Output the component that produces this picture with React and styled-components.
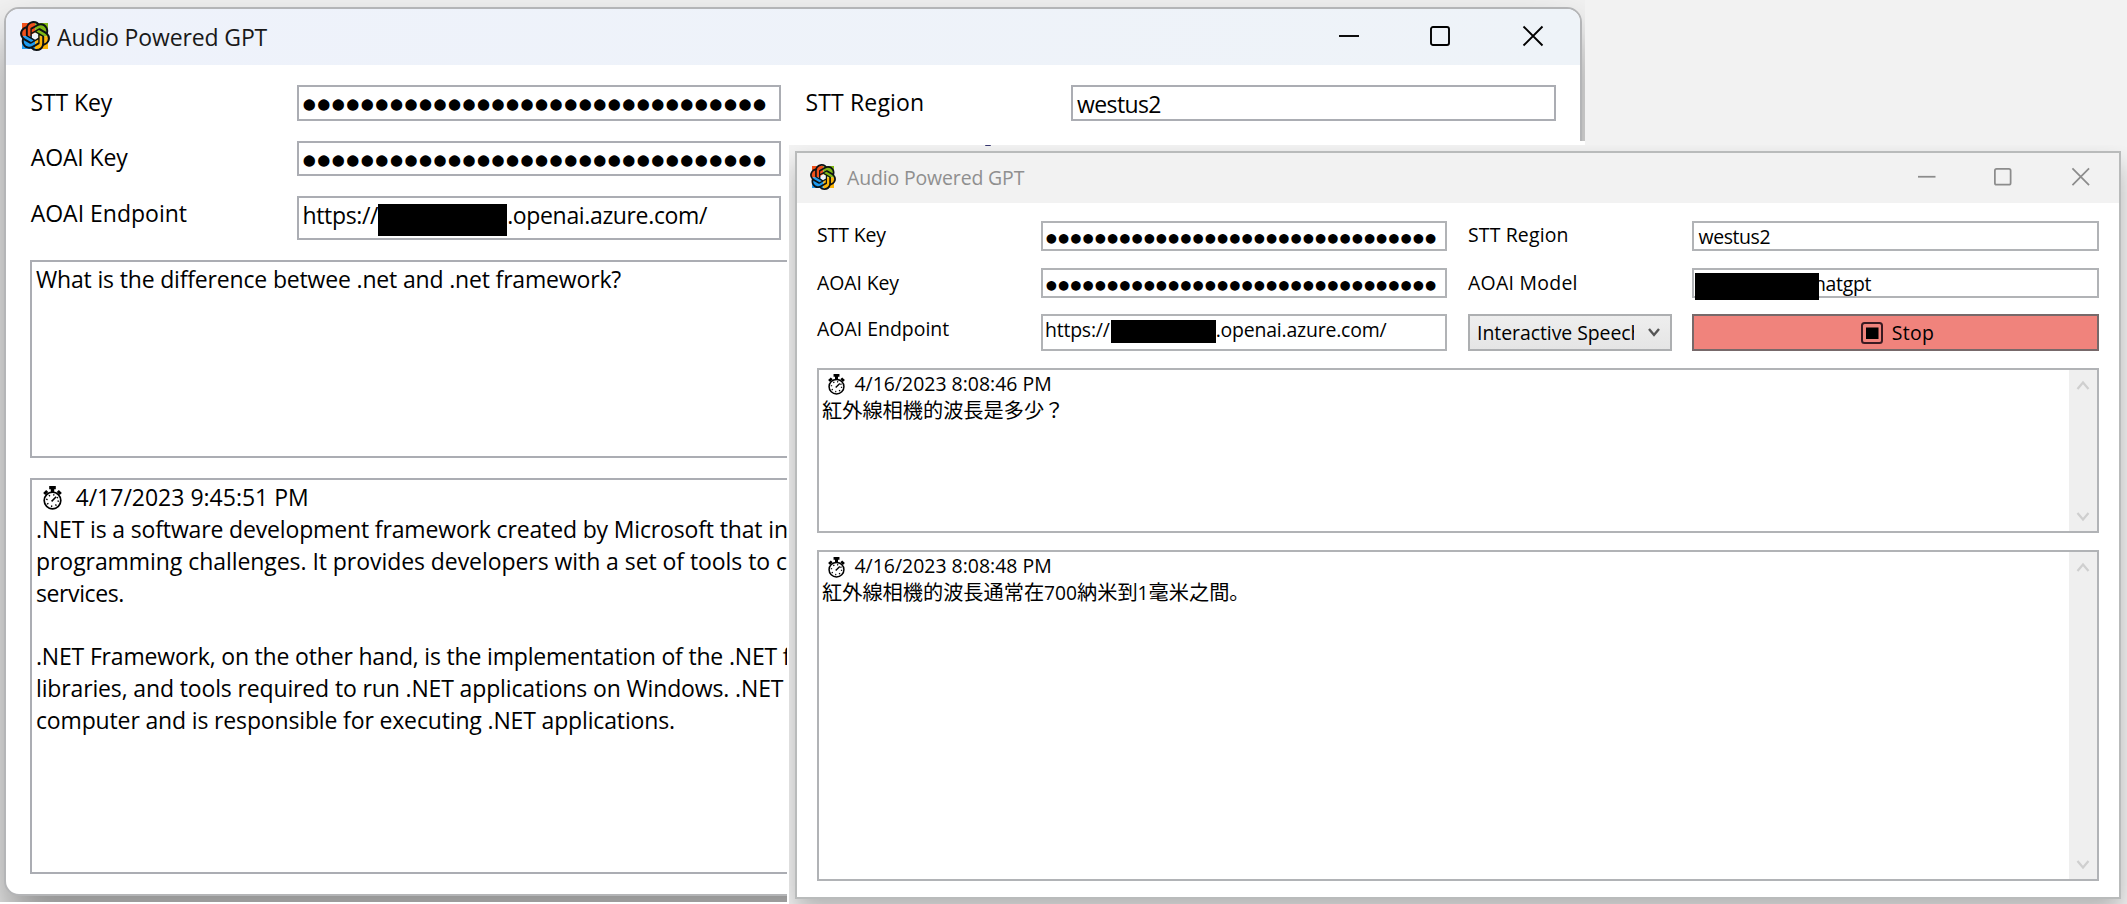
import React from "react";
import styled, { createGlobalStyle, ThemeProvider } from "styled-components";
import { SiOpenai } from "react-icons/si";

const GlobalStyle = createGlobalStyle`
  html, body { margin: 0; background: #f2f2f2; overflow: hidden; }
  *, *::before, *::after { box-sizing: border-box; }
`;

const large = {
  font: 23, line: 32, bullet: 19.2, bulletTrack: 2.97, edge: "#b4b5b7", field: "#abadb3",
  bar: "linear-gradient(90deg, #eef2fb, #eef3f8)", barHeight: 56, title: "#191919", radius: 15,
  logo: 30, glyph: "#000", glyphSize: 20, pad: "20px 24px 20px 24px",
  columns: "267px 484px 290px 485px", rows: "36px 35px 44px", gap: 20,
  shadow: "0 30px 50px rgba(0,0,0,.42)",
};

const small = {
  font: 19.45, line: 27, bullet: 16.2, bulletTrack: 2.49, edge: "#b9bbbb", field: "#b1b3b6",
  bar: "#f2f2f2", barHeight: 50, title: "#8f8f8f", radius: 0,
  logo: 26, glyph: "#8c8c8c", glyphSize: 17.5, pad: "18px 20px 16px 20px",
  columns: "224px 406px 245px 407px", rows: "30px 30px 37px", gap: 16.6,
  shadow: "0 14px 24px rgba(0,0,0,.26)",
};

const Desktop = styled.main`
  position: relative;
  width: 2127px;
  height: 904px;
  overflow: hidden;
  font-family: "Open Sans", "Noto Sans CJK JP", sans-serif;
  color: #000;
`;

const BackCapture = styled.section`
  position: absolute;
  left: 0;
  top: 0;
  width: 1585px;
  height: 904px;
  padding: 7px 3px 8px 4px;
  overflow: hidden;
  border-bottom: 2px solid #fff;
`;

const Backing = styled.div`
  position: absolute;
  left: 787px;
  top: 141px;
  width: 798px;
  height: 763px;
  background: #fff;
`;

const FrontCapture = styled.section`
  position: absolute;
  left: 789px;
  top: 145px;
  width: 1338px;
  height: 759px;
  padding: 6px 6px 5px;
  overflow: hidden;
  background: #f3f3f3;
`;

const Speck = styled.span`
  position: absolute;
  left: 196px;
  top: 0;
  width: 6px;
  height: 1px;
  border-radius: 0 0 3px 3px;
  background: #35356e;
`;

const Window = styled.article`
  display: flex;
  flex-direction: column;
  width: ${(p) => p.$width}px;
  height: ${(p) => p.$height}px;
  border: 2px solid ${(p) => p.theme.edge};
  border-radius: ${(p) => p.theme.radius}px;
  background: #fff;
  box-shadow: ${(p) => p.theme.shadow};
  font-size: ${(p) => p.theme.font}px;
  line-height: ${(p) => p.theme.line}px;
  white-space: pre;
`;

const TitleBar = styled.header`
  display: flex;
  flex: none;
  align-items: flex-start;
  height: ${(p) => p.theme.barHeight}px;
  padding-left: ${(p) => p.$left}px;
  padding-right: ${(p) => p.$right}px;
  border-radius: ${(p) => Math.max(0, p.theme.radius - 2)}px ${(p) => Math.max(0, p.theme.radius - 2)}px 0 0;
  background: ${(p) => p.theme.bar};
  color: ${(p) => p.theme.title};
`;

const TitleText = styled.h1`
  flex: 1;
  margin: ${(p) => p.$top}px 0 0 ${(p) => p.$gap}px;
  font: inherit;
  letter-spacing: -0.13px;
`;

const LogoTile = styled.span`
  position: relative;
  display: flex;
  width: ${(p) => p.theme.logo}px;
  height: ${(p) => p.theme.logo}px;
  margin-top: ${(p) => p.$top}px;
  align-items: center;
  justify-content: center;
  color: #0d1216;
  svg.knot { position: absolute; inset: 0; width: 100%; height: 100%; }
  svg.tiles { width: 88%; height: 88%; }
`;

const WindowButtons = styled.div`
  display: flex;
  gap: ${(p) => p.$gap}px;
  margin-top: ${(p) => p.$top}px;
  svg { display: block; width: ${(p) => p.theme.glyphSize}px; height: ${(p) => p.theme.glyphSize}px; overflow: visible; }
  svg:nth-child(2) { margin: 0 1px 0 -1px; }
`;

const Body = styled.div`
  display: flex;
  flex: 1;
  flex-direction: column;
  gap: ${(p) => p.theme.gap}px;
  padding: ${(p) => p.theme.pad};
`;

const Form = styled.div`
  display: grid;
  grid-template-columns: ${(p) => p.theme.columns};
  grid-template-rows: ${(p) => p.theme.rows};
  row-gap: ${(p) => p.theme.gap}px;
`;

const Label = styled.label`
  padding-left: ${(p) => p.$indent || 0}px;
  padding-top: ${(p) => p.$top || 0}px;
`;

const Text = styled.span`
  letter-spacing: ${(p) => p.$track || 0}px;
  margin-left: ${(p) => p.$shift || 0}px;
`;

const Field = styled.div`
  display: flex;
  align-items: flex-start;
  padding: ${(p) => p.$top || 0}px 0 0 ${(p) => p.$left || 3}px;
  border: 2px solid ${(p) => p.theme.field};
  background: #fff;
`;

const Bullets = styled.span`
  margin-top: ${(p) => p.$top}px;
  padding-left: 1.5px;
  font-family: "DejaVu Sans Mono", monospace;
  font-size: ${(p) => p.theme.bullet}px;
  letter-spacing: ${(p) => p.theme.bulletTrack}px;
`;

const Redaction = styled.span`
  position: relative;
  flex: none;
  width: ${(p) => p.$width}px;
  height: ${(p) => p.$height}px;
  margin-top: ${(p) => p.$top}px;
  margin-left: ${(p) => p.$left || 0}px;
  background: #000;
`;

const Combo = styled.div`
  display: flex;
  align-items: center;
  width: 204px;
  margin-left: 21px;
  padding: 0 9px 0 7px;
  border: 2px solid #adafb1;
  background: linear-gradient(#eeeeee, #e5e5e5);
`;

const ComboText = styled.span`
  width: 157px;
  overflow: hidden;
  margin-right: 14px;
  letter-spacing: -0.05px;
`;

const StopButton = styled.button`
  display: flex;
  align-items: center;
  justify-content: center;
  gap: 9px;
  padding: 0 0 0 4px;
  border: 2px solid #77696a;
  background: #f0837c;
  color: #000;
  font: inherit;
  letter-spacing: 0.3px;
`;

const TextArea = styled.div`
  display: flex;
  flex: none;
  height: ${(p) => p.$height}px;
  width: ${(p) => p.$width}px;
  margin-top: ${(p) => p.$top || 0}px;
  border: 2px solid ${(p) => p.theme.field};
  background: #fff;
`;

const TextContent = styled.div`
  flex: 1;
  padding: ${(p) => p.$pad};
`;

const Line = styled.div`
  height: ${(p) => p.$height || 31.9}px;
  letter-spacing: ${(p) => p.$track || 0}px;
  font-size: ${(p) => (p.$size ? p.$size + "px" : "inherit")};
`;

const StampLine = styled(Line)`
  display: flex;
  padding-left: ${(p) => p.$indent}px;
  svg { flex: none; margin-top: ${(p) => p.$top}px; margin-right: ${(p) => p.$gap}px; }
`;

const Digits = styled.span`
  font-size: 19.2px;
`;

const ScrollBar = styled.div`
  display: flex;
  flex-direction: column;
  align-items: center;
  justify-content: space-between;
  width: 28px;
  padding: 10px 0 9px;
  background: #efefef;
`;

const Logo = ({ top }) => (
  <LogoTile $top={top}>
    <svg className="tiles" viewBox="0 0 26 26">
      <path fill="#f1511b" d="M0 0h13v13H0z" />
      <path fill="#80b815" d="M13 0h13v13H13z" />
      <path fill="#1e9cf0" d="M0 13h13v13H0z" />
      <path fill="#fbb408" d="M13 13h13v13H13z" />
      <path fill="#eef3fa" d="M13 9.400l3.200 1.800v3.700L13 16.700l-3.200-1.800v-3.700z" />
    </svg>
    <SiOpenai className="knot" />
  </LogoTile>
);

const Controls = ({ gap, top, stroke, color }) => (
  <WindowButtons $gap={gap} $top={top}>
    <svg viewBox="0 0 20 20" fill="none" stroke={color} strokeWidth={stroke}><path d="M0 10h20" /></svg>
    <svg viewBox="0 0 20 20" fill="none" stroke={color} strokeWidth={stroke}><rect x="1" y="1" width="18" height="18" rx="2" /></svg>
    <svg viewBox="0 0 20 20" fill="none" stroke={color} strokeWidth={stroke}><path d="M.5.5l19 19M19.500.5l-19 19" /></svg>
  </WindowButtons>
);

const Stopwatch = ({ width, height }) => (
  <svg width={width} height={height} viewBox="0 0 19 24" preserveAspectRatio="none">
    <path d="M6.200 0h6.600v3.200h-1.600v2.800H7.800V3.200H6.200z" fill="#000" />
    <path d="M1.200 8l3-3M17.800 8l-3-3" stroke="#000" strokeWidth="3" />
    <circle cx="9.500" cy="14.500" r="8.300" fill="#fff" stroke="#000" strokeWidth="1.700" />
    <circle cx="9.500" cy="14.500" r="5.700" fill="none" stroke="#000" strokeWidth="1.500" strokeDasharray="1.300 3.177" />
    <path d="M8.600 15.400l4.600-4.600" stroke="#000" strokeWidth="1.500" />
  </svg>
);

const Chevron = ({ up }) => (
  <svg width="14" height="10" viewBox="0 0 14 10" fill="none" stroke="#cfcfcf" strokeWidth="2.200">
    <path d={up ? "M1.500 9L7 2.500 12.500 9" : "M1.500 1L7 7.500 12.500 1"} />
  </svg>
);

const Scroller = () => (
  <ScrollBar><Chevron up /><Chevron /></ScrollBar>
);

const dots = "●".repeat(32);

const BackWindow = () => (
  <ThemeProvider theme={large}>
    <Window $width={1578} $height={889}>
      <TitleBar $left={14} $right={37}>
        <Logo top={12} />
        <TitleText $top={12} $gap={7}>Audio Powered GPT</TitleText>
        <Controls gap={72} top={17} stroke={1.9} color={large.glyph} />
      </TitleBar>
      <Body>
        <Form>
          <Label $top={1} $indent={0.5}><Text $track={-0.1}>STT Key</Text></Label>
          <Field><Bullets $top={1}>{dots}</Bullets></Field>
          <Label $top={1} $indent={24.5}><Text $track={0.15}>STT Region</Text></Label>
          <Field $left={4} $top={0.5}><Text $track={-0.6}>westus2</Text></Field>
          <Label $indent={0.7}><Text $track={-0.1}>AOAI Key</Text></Label>
          <Field><Bullets $top={1}>{dots}</Bullets></Field>
          <span />
          <span />
          <Label $top={0.5} $indent={0.7}>AOAI Endpoint</Label>
          <Field $top={1} $left={3.5}>
            <Text $track={-0.35}>https://</Text>
            <Redaction $width={129} $height={32} $top={5} />
            <Text $track={-0.35}>.openai.azure.com/</Text>
          </Field>
        </Form>
        <TextArea $width={1526} $height={198}>
          <TextContent $pad="1px 4px">
            <Line $track={-0.17}>What is the difference betwee .net and .net framework?</Line>
          </TextContent>
        </TextArea>
        <TextArea $width={1526} $height={396}>
          <TextContent $pad="1px 4px">
            <StampLine $indent={7} $top={4.5} $gap={13.5}>
              <Stopwatch width={19} height={24} />4/17/2023 9:45:51 PM
            </StampLine>
            <Line $track={-0.15}>.NET is a software development framework created by Microsoft that in</Line>
            <Line $track={-0.06}>programming challenges. It provides developers with a set of tools to c</Line>
            <Line $track={-0.4}>services.</Line>
            <Line />
            <Line $track={-0.18}>.NET Framework, on the other hand, is the implementation of the .NET f</Line>
            <Line $track={-0.14}>libraries, and tools required to run .NET applications on Windows. .NET</Line>
            <Line $track={-0.15}>computer and is responsible for executing .NET applications.</Line>
          </TextContent>
        </TextArea>
      </Body>
    </Window>
  </ThemeProvider>
);

const FrontWindow = () => (
  <ThemeProvider theme={small}>
    <Window $width={1326} $height={748}>
      <TitleBar $left={13} $right={30}>
        <Logo top={11} />
        <TitleText $top={11} $gap={11}>Audio Powered GPT</TitleText>
        <Controls gap={59.5} top={15} stroke={2} color={small.glyph} />
      </TitleBar>
      <Body>
        <Form>
          <Label><Text $track={-0.1}>STT Key</Text></Label>
          <Field $left={2}><Bullets $top={1}>{dots}</Bullets></Field>
          <Label $indent={21}><Text $track={0.15}>STT Region</Text></Label>
          <Field $left={4.5}><Text $track={-0.4}>westus2</Text></Field>
          <Label $top={1}><Text $track={-0.1}>AOAI Key</Text></Label>
          <Field $left={2}><Bullets $top={1}>{dots}</Bullets></Field>
          <Label $top={1} $indent={21}><Text $track={0.27}>AOAI Model</Text></Label>
          <Field $left={1}>
            <Redaction $width={124} $height={27} $top={3} />
            <Text $track={-0.3} $shift={-5}>hatgpt</Text>
          </Field>
          <Label $top={0.5}>AOAI Endpoint</Label>
          <Field $left={2}>
            <Text $track={-0.2}>https://</Text>
            <Redaction $width={105} $height={23} $top={4} $left={1} />
            <Text $track={-0.2}>.openai.azure.com/</Text>
          </Field>
          <Combo>
            <ComboText>Interactive Speech</ComboText>
            <svg width="12" height="10" viewBox="0 0 12 10" fill="none" stroke="#555" strokeWidth="2.400">
              <path d="M1 1l5 6 5-6" />
            </svg>
          </Combo>
          <StopButton>
            <svg width="22" height="22" viewBox="0 0 22 22">
              <rect x="1" y="1" width="20" height="20" rx="2.500" fill="none" stroke="#3a1a22" strokeWidth="2" />
              <rect x="5" y="5.500" width="12.500" height="11.500" fill="#000" />
            </svg>
            Stop
          </StopButton>
        </Form>
        <TextArea $width={1282} $height={165}>
          <TextContent $pad="0 3px">
            <StampLine $height={27} $indent={6} $top={4.5} $gap={9.5}>
              <Stopwatch width={17} height={21} />4/16/2023 8:08:46 PM
            </StampLine>
            <Line $height={27} $size={20.2}>紅外線相機的波長是多少？</Line>
          </TextContent>
          <Scroller />
        </TextArea>
        <TextArea $width={1282} $height={331} $top={0.8}>
          <TextContent $pad="0 3px">
            <StampLine $height={27} $indent={6} $top={4.5} $gap={9.5}>
              <Stopwatch width={17} height={21} />4/16/2023 8:08:48 PM
            </StampLine>
            <Line $height={27} $size={20.2}>
              紅外線相機的波長通常在<Digits>700</Digits>納米到<Digits>1</Digits>毫米之間。
            </Line>
          </TextContent>
          <Scroller />
        </TextArea>
      </Body>
    </Window>
  </ThemeProvider>
);

export default function App() {
  return (
    <Desktop>
      <GlobalStyle />
      <BackCapture><BackWindow /></BackCapture>
      <Backing />
      <FrontCapture>
        <Speck />
        <FrontWindow />
      </FrontCapture>
    </Desktop>
  );
}
